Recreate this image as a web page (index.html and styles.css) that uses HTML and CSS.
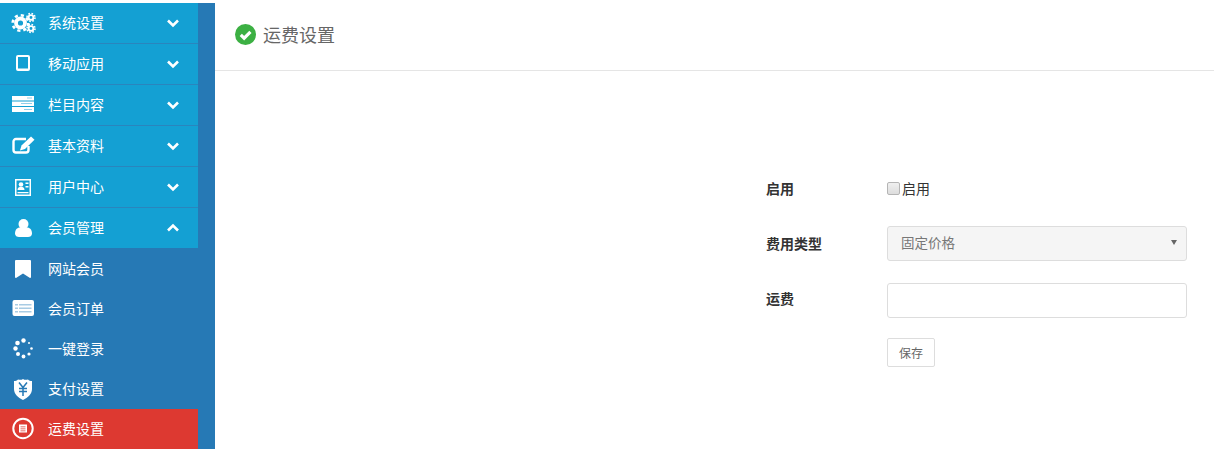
FILE: index.html
```html
<!DOCTYPE html>
<html lang="zh">
<head>
<meta charset="utf-8">
<title>运费设置</title>
<link rel="stylesheet" href="styles.css">
</head>
<body>
<div class="app">
  <aside class="sidebar">
    <nav class="menu">
      <a class="item top">
        <svg class="ico" viewBox="0 0 24 20"><g fill="none" stroke="#fff"><circle cx="9.500" cy="10" r="4.500" stroke-width="3.800"/><circle cx="9.500" cy="10" r="7.800" stroke-width="2.600" stroke-dasharray="3.200 2.930"/><circle cx="20" cy="4.500" r="2.400" stroke-width="1.900"/><circle cx="20" cy="4.500" r="4" stroke-width="1.600" stroke-dasharray="1.600 1.540"/><circle cx="20" cy="15.500" r="2.400" stroke-width="1.900"/><circle cx="20" cy="15.500" r="4" stroke-width="1.600" stroke-dasharray="1.600 1.540"/></g></svg>
        <span class="label">系统设置</span>
        <svg class="chev" viewBox="0 0 14 10"><path d="M2 2.500l5 5 5-5"/></svg>
      </a>
      <a class="item top">
        <svg class="ico" viewBox="0 0 24 20"><path fill="#fff" fill-rule="evenodd" d="M7 1A2 2 0 0 0 5 3v12a2 2 0 0 0 2 2h10a2 2 0 0 0 2-2V3a2 2 0 0 0-2-2zM7 3h10v11.500H7z"/></svg>
        <span class="label">移动应用</span>
        <svg class="chev" viewBox="0 0 14 10"><path d="M2 2.500l5 5 5-5"/></svg>
      </a>
      <a class="item top">
        <svg class="ico" viewBox="0 0 24 20"><g fill="#fff"><rect x="1" y="1" width="22" height="4.500"/><rect x="1" y="6.500" width="22" height="4.500"/><rect x="1" y="12" width="22" height="5"/></g><g fill="#8fd0ea"><rect x="16" y="2.500" width="5" height="1"/><rect x="10" y="8" width="11" height="1"/><rect x="13" y="14" width="8" height="1"/></g></svg>
        <span class="label">栏目内容</span>
        <svg class="chev" viewBox="0 0 14 10"><path d="M2 2.500l5 5 5-5"/></svg>
      </a>
      <a class="item top">
        <svg class="ico" viewBox="0 0 24 20"><path d="M15 3H5a2.500 2.500 0 0 0-2.500 2.500v8.500A2.500 2.500 0 0 0 5 16.500h10a2.500 2.500 0 0 0 2.500-2.500v-4" fill="none" stroke="#fff" stroke-width="2.400"/><path fill="#fff" d="M20 .5l3.500 3.300L14 13l-5 1.500L10.500 9.500z"/></svg>
        <span class="label">基本资料</span>
        <svg class="chev" viewBox="0 0 14 10"><path d="M2 2.500l5 5 5-5"/></svg>
      </a>
      <a class="item top">
        <svg class="ico" viewBox="0 0 24 20"><path fill="#fff" fill-rule="evenodd" d="M4 2h16v17H4zM5.500 3.500v14h13v-14z"/><circle cx="10" cy="7.500" r="2.300" fill="#fff"/><path fill="#fff" d="M6.500 13c0-2.500 1.500-3 3.500-3s3.500.5 3.500 3zM14.500 5.500h3v1.500h-3zM14.500 9h3v1.500h-3zM6.500 15h11v1.200h-11z"/></svg>
        <span class="label">用户中心</span>
        <svg class="chev" viewBox="0 0 14 10"><path d="M2 2.500l5 5 5-5"/></svg>
      </a>
      <a class="item top last">
        <svg class="ico" viewBox="0 0 24 20"><circle cx="12.500" cy="6" r="5" fill="#fff"/><path fill="#fff" d="M4 15.500c0-4.500 3-6 5-6h7c2 0 5 1.500 5 6 0 2.500-2 3.500-4 3.500H8c-2 0-4-1-4-3.500z"/></svg>
        <span class="label">会员管理</span>
        <svg class="chev" viewBox="0 0 14 10"><path d="M2 7.500l5-5 5 5"/></svg>
      </a>
      <a class="item sub">
        <svg class="ico" viewBox="0 0 24 20"><path fill="#fff" d="M5 1h14a1 1 0 0 1 1 1v16.500l-1 .5-7-4.500-7 4.500-1-.5V2a1 1 0 0 1 1-1z"/></svg>
        <span class="label">网站会员</span>
      </a>
      <a class="item sub">
        <svg class="ico" viewBox="0 0 24 20"><rect x="1.500" y="1" width="21.500" height="16" rx="2" fill="#fff"/><g fill="#a8cbe3"><rect x="4" y="5" width="3" height="1.500"/><rect x="8" y="5" width="12.500" height="1.500"/><rect x="4" y="8.500" width="3" height="1.500"/><rect x="8" y="8.500" width="12.500" height="1.500"/><rect x="4" y="12" width="3" height="1.500"/><rect x="8" y="12" width="12.500" height="1.500"/></g></svg>
        <span class="label">会员订单</span>
      </a>
      <a class="item sub">
        <svg class="ico" viewBox="0 0 24 20"><g fill="#fff"><circle cx="12.500" cy="1.500" r="2.200"/><circle cx="6.500" cy="4" r="2.300"/><circle cx="4.500" cy="9.500" r="2.200"/><circle cx="7" cy="15" r="2"/><circle cx="12.500" cy="17.500" r="1.900"/><circle cx="18" cy="15" r="1.600"/><circle cx="20.500" cy="9.500" r="1.300"/><circle cx="18" cy="4" r="1"/></g></svg>
        <span class="label">一键登录</span>
      </a>
      <a class="item sub">
        <svg class="ico" viewBox="0 0 24 20"><path fill="#fff" d="M3 2c1.500 0 3-.5 4-1.500C9 1 10.500 1 12 0c1.500 1 3 1 5 .5C18 1.500 19.500 2 21 2v8c0 5-4 8.500-9 11C7 18.500 3 15 3 10z"/><path fill="none" stroke="#2679b5" stroke-width="1.500" d="M8 3.500L12 8.500l4-5M12 8.500V17M8 9.500h8M8 12.500h8"/></svg>
        <span class="label">支付设置</span>
      </a>
      <a class="item sub active">
        <svg class="ico" viewBox="0 0 24 20"><circle cx="12" cy="9.500" r="9.700" fill="none" stroke="#fff" stroke-width="2"/><path fill="#fff" fill-rule="evenodd" d="M8 5.500h8v8H8zM9.500 7.500v.8h5v-.8zM9.500 9.500v.8h5v-.8zM9.500 11.500v.8h5v-.8z"/></svg>
        <span class="label">运费设置</span>
      </a>
    </nav>
  </aside>
  <main class="content">
    <header class="page-head">
      <svg class="check" viewBox="0 0 20 20"><circle cx="10" cy="10" r="10" fill="#3cb043"/><path d="M5.500 10.300l3.200 3.200 6-6" fill="none" stroke="#fff" stroke-width="3"/></svg>
      <h1 class="page-title">运费设置</h1>
    </header>
    <form class="form">
      <div class="row row-check">
        <label class="field-label">启用</label>
        <label class="check-line"><span class="box"></span>启用</label>
      </div>
      <div class="row row-select">
        <label class="field-label">费用类型</label>
        <div class="select"><span class="select-text">固定价格</span><i class="caret"></i></div>
      </div>
      <div class="row row-input">
        <label class="field-label">运费</label>
        <input class="input" type="text">
      </div>
      <div class="row row-btn">
        <span class="field-label"></span>
        <button class="btn" type="button">保存</button>
      </div>
    </form>
  </main>
</div>
</body>
</html>
```
FILE: styles.css
```css
* { box-sizing: border-box; }
html, body { margin: 0; height: 100%; overflow: hidden; background: #fff; }
body { font-family: "Liberation Sans", "Noto Sans CJK SC", sans-serif; font-size: 14px; color: #333; }
.app { display: flex; height: 449px; }
.sidebar { width: 215px; flex: none; padding-top: 3px; background: linear-gradient(#fff 3px, #2679b5 3px); }
.menu { width: 198px; display: flex; flex-direction: column; }
.item { display: flex; align-items: center; color: #fff; height: 40px; padding-left: 11px; }
.item.top { height: 41px; background: #14a0d3; border-bottom: 1px solid #2a85bd; }
.item.top.last { border-bottom-color: #2679b5; }
.item.sub { background: #2679b5; }
.item.active { background: #dd3931; }
.ico { width: 24px; height: 20px; flex: none; overflow: visible; }
.label { margin-left: 13px; flex: 1; line-height: 20px; }
.chev { width: 14px; height: 10px; margin-right: 18px; fill: none; stroke: #fff; stroke-width: 2.600; }
.content { flex: 1; min-width: 0; }
.page-head { height: 71px; display: flex; align-items: center; padding-left: 20px; border-bottom: 1px solid #e5e5e5; }
.check { width: 21px; height: 21px; margin-top: -2px; }
.page-title { margin: -2px 0 0 7px; font-size: 18px; font-weight: 400; color: #666; }
.form { padding: 103px 27px 0 551px; display: flex; flex-direction: column; }
.row { display: flex; align-items: center; }
.field-label { width: 121px; flex: none; font-weight: 700; color: #333; }
.row-check { height: 30px; }
.row-check .field-label, .check-line { margin-top: -2px; }
.row-select { height: 35px; margin-top: 22px; }
.row-select .field-label { margin-top: -2px; }
.row-input { height: 35px; margin-top: 22px; align-items: flex-start; }
.row-input .field-label { line-height: 32px; }
.row-btn { margin-top: 20px; }
.check-line { display: flex; align-items: center; color: #333; font-weight: 400; }
.box { width: 13px; height: 13px; margin-right: 2px; margin-top: 1px; border: 1px solid #b5b5b5; border-radius: 2px; background: linear-gradient(#f0f0f0, #ddd); }
.select { flex: 1; height: 35px; display: flex; align-items: center; justify-content: space-between; padding: 0 9px 0 13px; background: #f5f5f5; border: 1px solid #ddd; border-radius: 3px; color: #777; font-size: 13.500px; }
.select-text { margin-top: -3px; }
.caret { width: 0; height: 0; margin-top: -2px; border-left: 3px solid transparent; border-right: 3px solid transparent; border-top: 5px solid #666; }
.input { flex: 1; min-width: 0; height: 35px; padding: 0 12px; background: #fff; border: 1px solid #ddd; border-radius: 3px; outline: 0; }
.btn { width: 48px; height: 29px; padding: 0; background: #fff; border: 1px solid #ddd; border-radius: 2px; color: #666; font: 12px "Liberation Sans", "Noto Sans CJK SC", sans-serif; }
```
